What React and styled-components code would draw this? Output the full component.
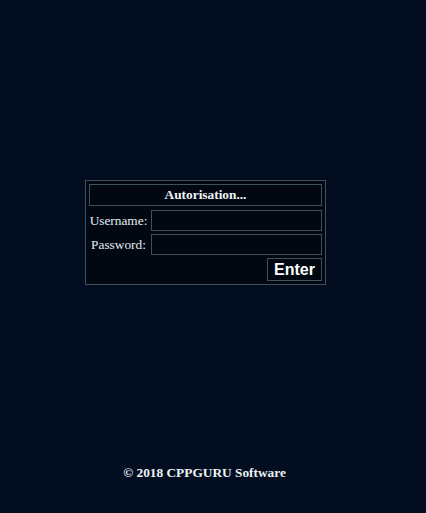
import React from 'react';
import styled, { createGlobalStyle } from 'styled-components';

const Global = createGlobalStyle`
  html, body {
    margin: 0;
    padding: 0;
    background: #020d1f;
  }
`;

const Page = styled.div`
  width: 409px;
  height: 513px;
  display: flex;
  flex-direction: column;
  font-family: "Liberation Serif", serif;
  color: #e4ecf4;
`;

const Main = styled.div`
  height: 465px;
  padding-left: 2px;
  display: flex;
  justify-content: center;
  align-items: center;
`;

const Panel = styled.form`
  width: 233px;
  padding: 3px;
  border: 1px solid #3e525e;
  background: #010811;
  display: grid;
  grid-template-columns: 59px 1fr;
  column-gap: 3px;
  row-gap: 3px;
  margin: 0;
`;

const Title = styled.div`
  grid-column: 1 / span 2;
  height: 20px;
  margin-bottom: 1px;
  border: 1px solid #3e525e;
  display: flex;
  align-items: center;
  justify-content: center;
  font-weight: bold;
  font-size: 13.33px;
  color: #f0f4f8;
`;

const Label = styled.label`
  font-size: 13.33px;
  display: flex;
  align-items: center;
  justify-content: center;
  height: 21px;
`;

const Input = styled.input`
  box-sizing: border-box;
  height: 21px;
  width: 100%;
  margin: 0;
  background: #020811;
  border: 1px solid #3e525e;
  color: #e4ecf4;
  outline: none;
`;

const ButtonCell = styled.div`
  grid-column: 2;
  display: flex;
  justify-content: flex-end;
`;

const Button = styled.button`
  box-sizing: border-box;
  height: 23px;
  padding: 0 6px;
  background: #010811;
  border: 1px solid #3e525e;
  color: #ffffff;
  font-family: "Liberation Sans", Arial, sans-serif;
  font-weight: bold;
  font-size: 16px;
  line-height: 1;
`;

const Footer = styled.div`
  text-align: center;
  font-weight: bold;
  font-size: 13.33px;
  color: #eef2f6;
`;

export default function App() {
  return (
    <Page>
      <Global />
      <Main>
        <Panel onSubmit={e => e.preventDefault()}>
          <Title>Autorisation...</Title>
          <Label>Username:</Label>
          <Input type="text" />
          <Label>Password:</Label>
          <Input type="password" />
          <ButtonCell>
            <Button type="submit">Enter</Button>
          </ButtonCell>
        </Panel>
      </Main>
      <Footer>© 2018 CPPGURU Software</Footer>
    </Page>
  );
}
